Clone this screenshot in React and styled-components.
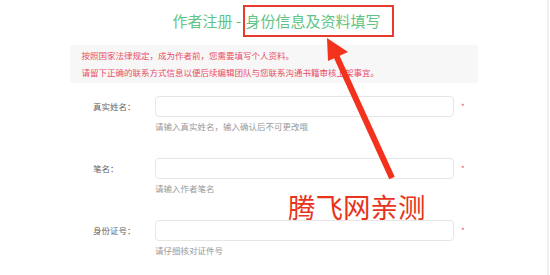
import React from 'react';
import styled, { createGlobalStyle } from 'styled-components';

const GlobalStyle = createGlobalStyle`
  html, body {
    margin: 0;
    padding: 0;
    background: #fff;
  }
  body {
    font-family: "Noto Sans CJK SC", "Noto Sans", sans-serif;
  }
`;

const fields = [
  { label: '真实姓名：', help: '请输入真实姓名，输入确认后不可更改哦' },
  { label: '笔名：', help: '请输入作者笔名' },
  { label: '身份证号：', help: '请仔细核对证件号' },
];

function App() {
  return (
    <>
      <GlobalStyle />
      <Page>
        <Title>
          作者注册 - <Marked>身份信息及资料填写</Marked>
        </Title>
        <Notice>
          <p>按照国家法律规定，成为作者前，您需要填写个人资料。</p>
          <p>请留下正确的联系方式信息以便后续编辑团队与您联系沟通书籍审核上架事宜。</p>
        </Notice>
        <Form>
          {fields.map((f) => (
            <Row key={f.label}>
              <Label>{f.label}</Label>
              <Field>
                <InputLine>
                  <Input />
                  <Star>*</Star>
                </InputLine>
                <Help>{f.help}</Help>
              </Field>
            </Row>
          ))}
        </Form>
        <Watermark>腾飞网亲测</Watermark>
        <Arrow width="80" height="150" viewBox="0 0 80 150">
          <line x1="15" y1="18" x2="72" y2="143" stroke="#f2321c" strokeWidth="6" />
          <polygon points="7,3 8,26 28,17" fill="#f2321c" />
        </Arrow>
      </Page>
    </>
  );
}

export default App;

const Page = styled.div`
  position: relative;
  width: 547px;
  height: 275px;
  border-right: 2px solid #efefef;
  overflow: hidden;
`;

const Title = styled.h1`
  margin: 0;
  padding: 10px 0 0 20px;
  height: 38px;
  box-sizing: border-box;
  text-align: center;
  font-size: 15px;
  font-weight: 400;
  line-height: 21px;
  color: #5fc486;
  white-space: nowrap;
`;

const Marked = styled.span`
  display: inline-block;
  margin-left: -1px;
  padding: 3px 12px 4px 0;
  margin-top: -5px;
  border: 2px solid #e63b2e;
  vertical-align: top;
  line-height: 21px;
`;

const Notice = styled.div`
  margin: 7px auto 0;
  width: 408px;
  box-sizing: border-box;
  padding: 2px 12px;
  background: #f7f7f7;
  border-radius: 4px;
  color: #ea4d68;
  font-size: 8.5px;
  line-height: 17px;

  p {
    margin: 0;
  }
`;

const Form = styled.div`
  margin-top: 13px;
  padding-left: 93px;
`;

const Row = styled.div`
  display: flex;
  align-items: flex-start;
  height: 62px;
`;

const Label = styled.div`
  width: 62px;
  font-size: 8.5px;
  line-height: 21px;
  color: #666;
  white-space: nowrap;
`;

const Field = styled.div`
  display: flex;
  flex-direction: column;
`;

const InputLine = styled.div`
  display: flex;
  align-items: center;
`;

const Input = styled.div`
  width: 299px;
  height: 21px;
  box-sizing: border-box;
  border: 1px solid #e6e6e6;
  border-radius: 4px;
  background: #fff;
`;

const Star = styled.span`
  margin-left: 7px;
  color: #e05a6a;
  font-size: 8px;
  line-height: 8px;
`;

const Help = styled.div`
  margin-top: 3px;
  font-size: 8.5px;
  line-height: 12px;
  color: #999;
`;

const Watermark = styled.div`
  position: absolute;
  left: 288px;
  top: 188px;
  font-size: 27.5px;
  line-height: 36px;
  color: #e8341c;
  white-space: nowrap;
`;

const Arrow = styled.svg`
  position: absolute;
  left: 320px;
  top: 35px;
`;
